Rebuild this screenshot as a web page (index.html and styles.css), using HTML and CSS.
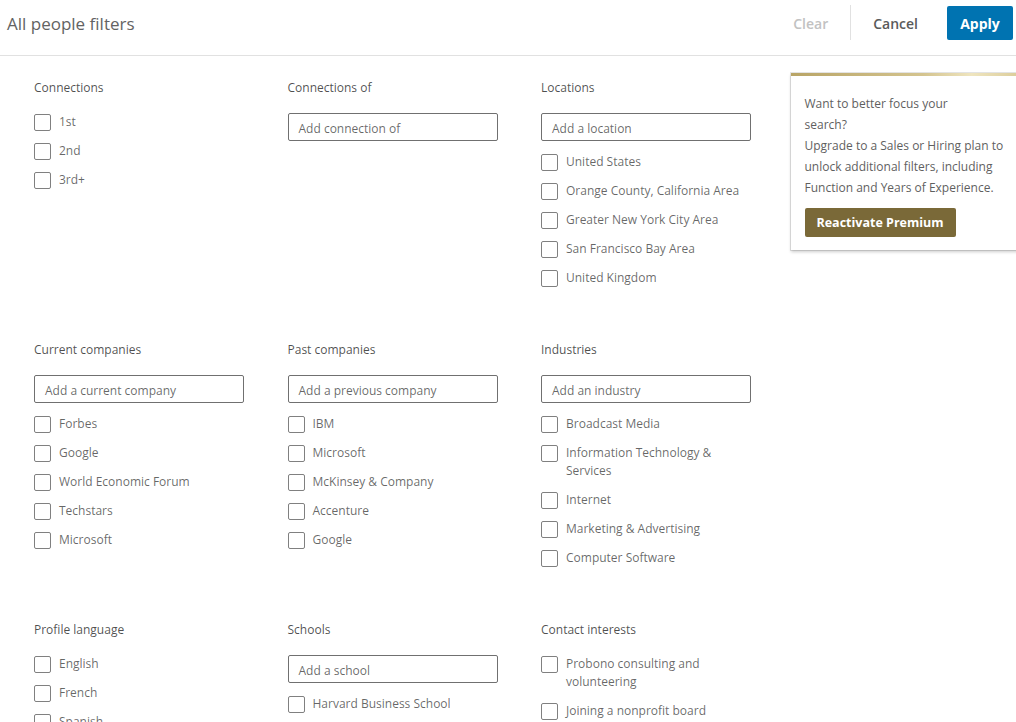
FILE: index.html
```html
<!DOCTYPE html>
<html>
<head>
<meta charset="utf-8">
<link rel="stylesheet" href="styles.css">
</head>
<body>
<header class="top">
  <h1 class="title">All people filters</h1>
  <div class="actions">
    <button class="btn-clear">Clear</button>
    <span class="divider"></span>
    <button class="btn-cancel">Cancel</button>
    <button class="btn-apply">Apply</button>
  </div>
</header>
<div class="body">
  <main class="grid">
    <section class="filter">
      <h3 class="label">Connections</h3>
      <ul class="list">
        <li class="item"><span class="box"></span><span class="text">1st</span></li>
        <li class="item"><span class="box"></span><span class="text">2nd</span></li>
        <li class="item"><span class="box"></span><span class="text">3rd+</span></li>
      </ul>
    </section>
    <section class="filter">
      <h3 class="label">Connections of</h3>
      <div class="input">Add connection of</div>
    </section>
    <section class="filter">
      <h3 class="label">Locations</h3>
      <div class="input">Add a location</div>
      <ul class="list">
        <li class="item"><span class="box"></span><span class="text">United States</span></li>
        <li class="item"><span class="box"></span><span class="text">Orange County, California Area</span></li>
        <li class="item"><span class="box"></span><span class="text">Greater New York City Area</span></li>
        <li class="item"><span class="box"></span><span class="text">San Francisco Bay Area</span></li>
        <li class="item"><span class="box"></span><span class="text">United Kingdom</span></li>
      </ul>
    </section>

    <section class="filter">
      <h3 class="label">Current companies</h3>
      <div class="input">Add a current company</div>
      <ul class="list">
        <li class="item"><span class="box"></span><span class="text">Forbes</span></li>
        <li class="item"><span class="box"></span><span class="text">Google</span></li>
        <li class="item"><span class="box"></span><span class="text">World Economic Forum</span></li>
        <li class="item"><span class="box"></span><span class="text">Techstars</span></li>
        <li class="item"><span class="box"></span><span class="text">Microsoft</span></li>
      </ul>
    </section>
    <section class="filter">
      <h3 class="label">Past companies</h3>
      <div class="input">Add a previous company</div>
      <ul class="list">
        <li class="item"><span class="box"></span><span class="text">IBM</span></li>
        <li class="item"><span class="box"></span><span class="text">Microsoft</span></li>
        <li class="item"><span class="box"></span><span class="text">McKinsey &amp; Company</span></li>
        <li class="item"><span class="box"></span><span class="text">Accenture</span></li>
        <li class="item"><span class="box"></span><span class="text">Google</span></li>
      </ul>
    </section>
    <section class="filter">
      <h3 class="label">Industries</h3>
      <div class="input">Add an industry</div>
      <ul class="list">
        <li class="item"><span class="box"></span><span class="text">Broadcast Media</span></li>
        <li class="item"><span class="box"></span><span class="text">Information Technology &amp;<br>Services</span></li>
        <li class="item"><span class="box"></span><span class="text">Internet</span></li>
        <li class="item"><span class="box"></span><span class="text">Marketing &amp; Advertising</span></li>
        <li class="item"><span class="box"></span><span class="text">Computer Software</span></li>
      </ul>
    </section>

    <section class="filter">
      <h3 class="label">Profile language</h3>
      <ul class="list">
        <li class="item"><span class="box"></span><span class="text">English</span></li>
        <li class="item"><span class="box"></span><span class="text">French</span></li>
        <li class="item"><span class="box"></span><span class="text">Spanish</span></li>
      </ul>
    </section>
    <section class="filter">
      <h3 class="label">Schools</h3>
      <div class="input">Add a school</div>
      <ul class="list">
        <li class="item"><span class="box"></span><span class="text">Harvard Business School</span></li>
      </ul>
    </section>
    <section class="filter">
      <h3 class="label">Contact interests</h3>
      <ul class="list">
        <li class="item"><span class="box"></span><span class="text">Probono consulting and<br>volunteering</span></li>
        <li class="item"><span class="box"></span><span class="text">Joining a nonprofit board</span></li>
      </ul>
    </section>
  </main>
  <aside class="premium">
    <p class="premium-text">Want to better focus your<br>search?<br>Upgrade to a Sales or Hiring plan to<br>unlock additional filters, including<br>Function and Years of Experience.</p>
    <button class="btn-premium">Reactivate Premium</button>
  </aside>
</div>
</body>
</html>
```
FILE: styles.css
```css
* { box-sizing: border-box; }
html, body { margin: 0; padding: 0; }
body {
  width: 1016px;
  height: 722px;
  overflow: hidden;
  background: #fff;
  font-family: "Open Sans", "Noto Sans", sans-serif;
  font-size: 12px;
  color: rgba(0,0,0,0.6);
}
.top {
  height: 56px;
  border-bottom: 1px solid #e1e1e1;
  display: flex;
  align-items: flex-start;
  justify-content: space-between;
}
.title {
  margin: 11px 0 0 7px;
  font-size: 17px;
  font-weight: 400;
  line-height: 26px;
  color: #636363;
}
.actions {
  display: flex;
  align-items: flex-start;
  padding-top: 6px;
  padding-right: 3px;
}
button {
  font-family: inherit;
  border: 0;
  background: none;
  cursor: pointer;
  padding: 0;
}
.btn-clear {
  height: 34px;
  font-size: 14px;
  font-weight: 600;
  color: #c2c2c2;
  margin-right: 22px;
}
.divider {
  width: 1px;
  height: 35px;
  margin-top: -1px;
  background: #e1e1e1;
}
.btn-cancel {
  height: 34px;
  font-size: 14px;
  font-weight: 600;
  color: #5a5a5a;
  margin-left: 22px;
  margin-right: 29px;
}
.btn-apply {
  height: 34px;
  width: 66px;
  font-size: 14px;
  font-weight: 700;
  color: #fff;
  background: #0073b1;
  border-radius: 2px;
}
.body {
  display: flex;
  align-items: flex-start;
}
.grid {
  display: grid;
  grid-template-columns: repeat(3, 210px);
  column-gap: 43.5px;
  row-gap: 43px;
  padding: 23px 0 0 34px;
}
.filter { min-width: 0; }
.label {
  margin: 0 0 16px;
  font-size: 12px;
  font-weight: 400;
  line-height: 18px;
  color: rgba(0,0,0,0.7);
}
.label + .list { margin-top: 1px; }
.input {
  height: 28px;
  border: 1px solid #707070;
  border-radius: 2px;
  padding: 2px 10px 0;
  line-height: 25px;
  font-size: 12px;
  color: rgba(0,0,0,0.6);
  margin-bottom: 12px;
}
.list {
  list-style: none;
  margin: 0;
  padding: 0;
}
.item {
  display: flex;
  align-items: flex-start;
  gap: 8px;
  padding-bottom: 11px;
  line-height: 18px;
}
.box {
  flex: none;
  width: 17px;
  height: 17px;
  margin-top: 1px;
  border: 1px solid #808080;
  border-radius: 2px;
}
.premium {
  flex: none;
  margin: 17px 0 0 39.5px;
  width: 240px;
  border-top: 3px solid #c9b67a;
  border-image: linear-gradient(90deg, #b8a466 0%, #d4c48f 55%, #efe5bf 75%, #d6c690 100%) 1;
  background: #fff;
  box-shadow: 0 0 0 1px rgba(0,0,0,0.1), 0 2px 3px rgba(0,0,0,0.2);
  padding: 17px 14px 13px 14px;
}
.premium-text {
  margin: 0;
  font-size: 12px;
  line-height: 21px;
  color: #5f5f5f;
}
.btn-premium {
  margin-top: 10px;
  height: 29px;
  width: 151px;
  background: #7a6938;
  color: #fff;
  font-size: 12.5px;
  font-weight: 700;
  border-radius: 2px;
}
```
